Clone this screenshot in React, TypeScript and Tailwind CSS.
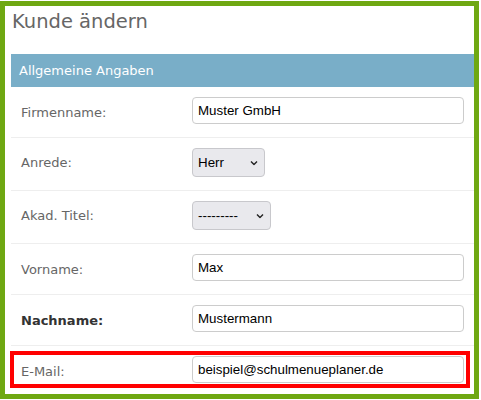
import React from "react"

const labelFont = { fontFamily: '"DejaVu Sans", Verdana, sans-serif' }

function Chevron() {
  return (
    <svg width="8" height="5" viewBox="0 0 8 5" className="pointer-events-none absolute top-1/2 -translate-y-1/2 right-[7px]">
      <path d="M1 1 L4 4 L7 1" fill="none" stroke="#222" strokeWidth="1.4" />
    </svg>
  )
}

function Row({ label, bold, tall, children }: { label: string; bold?: boolean; tall?: boolean; children: React.ReactNode }) {
  return (
    <div className="flex border-b border-[#eeeeee] pt-[10px] pb-[13px] px-[10px]">
      <div
        className={`w-[171px] shrink-0 ${tall ? "pt-[5px]" : "pt-[6px]"} text-[13px] leading-normal ${bold ? "font-bold text-[#333]" : "text-[#666]"}`}
        style={labelFont}
      >
        {label}
      </div>
      {children}
    </div>
  )
}

function TextInput({ value }: { value: string }) {
  return (
    <input
      defaultValue={value}
      className="h-[27px] w-[272px] rounded-[4px] border border-[#cccccc] px-[5px] text-[13.33px] text-black outline-none font-['Liberation_Sans',Arial,sans-serif]"
    />
  )
}

function Select({ value, width }: { value: string; width: string }) {
  return (
    <div className={`relative h-[29px] ${width}`}>
      <select
        defaultValue={value}
        className="h-full w-full appearance-none rounded-[4px] border border-[#c8c8cc] bg-[#e9e9ed] pl-[5px] text-[13.33px] text-black outline-none font-['Liberation_Sans',Arial,sans-serif]"
      >
        <option>{value}</option>
      </select>
      <Chevron />
    </div>
  )
}

export default function App() {
  return (
    <div className="w-[481px] h-[400px] bg-white pt-[1px]">
      <div className="w-[479px] h-[398px] border-[5px] border-[#6fa812] overflow-hidden pl-[6px]">
        <div className="w-[464px]">
          <h1 className="mt-[4px] mb-[20px] pl-[1px] text-[19.5px] leading-[24px] font-normal text-[#666]" style={labelFont}>
            Kunde ändern
          </h1>

          <div className="flex h-[33px] items-center bg-[#79aec8] pl-[8px] text-[13px] text-white" style={labelFont}>
            Allgemeine Angaben
          </div>

          <Row label="Firmenname:">
            <TextInput value="Muster GmbH" />
          </Row>
          <Row label="Anrede:" tall>
            <Select value="Herr" width="w-[73px]" />
          </Row>
          <Row label="Akad. Titel:" tall>
            <Select value="---------" width="w-[79px]" />
          </Row>
          <Row label="Vorname:">
            <TextInput value="Max" />
          </Row>
          <Row label="Nachname:" bold>
            <TextInput value="Mustermann" />
          </Row>

          {/* highlighted row */}
          <div className="relative">
            <Row label="E-Mail:">
              <TextInput value="beispiel@schulmenueplaner.de" />
            </Row>
            <div className="pointer-events-none absolute left-[-1px] top-[5px] h-[37px] w-[460px] border-4 border-[#ff0000]" />
          </div>
        </div>
      </div>
    </div>
  )
}
